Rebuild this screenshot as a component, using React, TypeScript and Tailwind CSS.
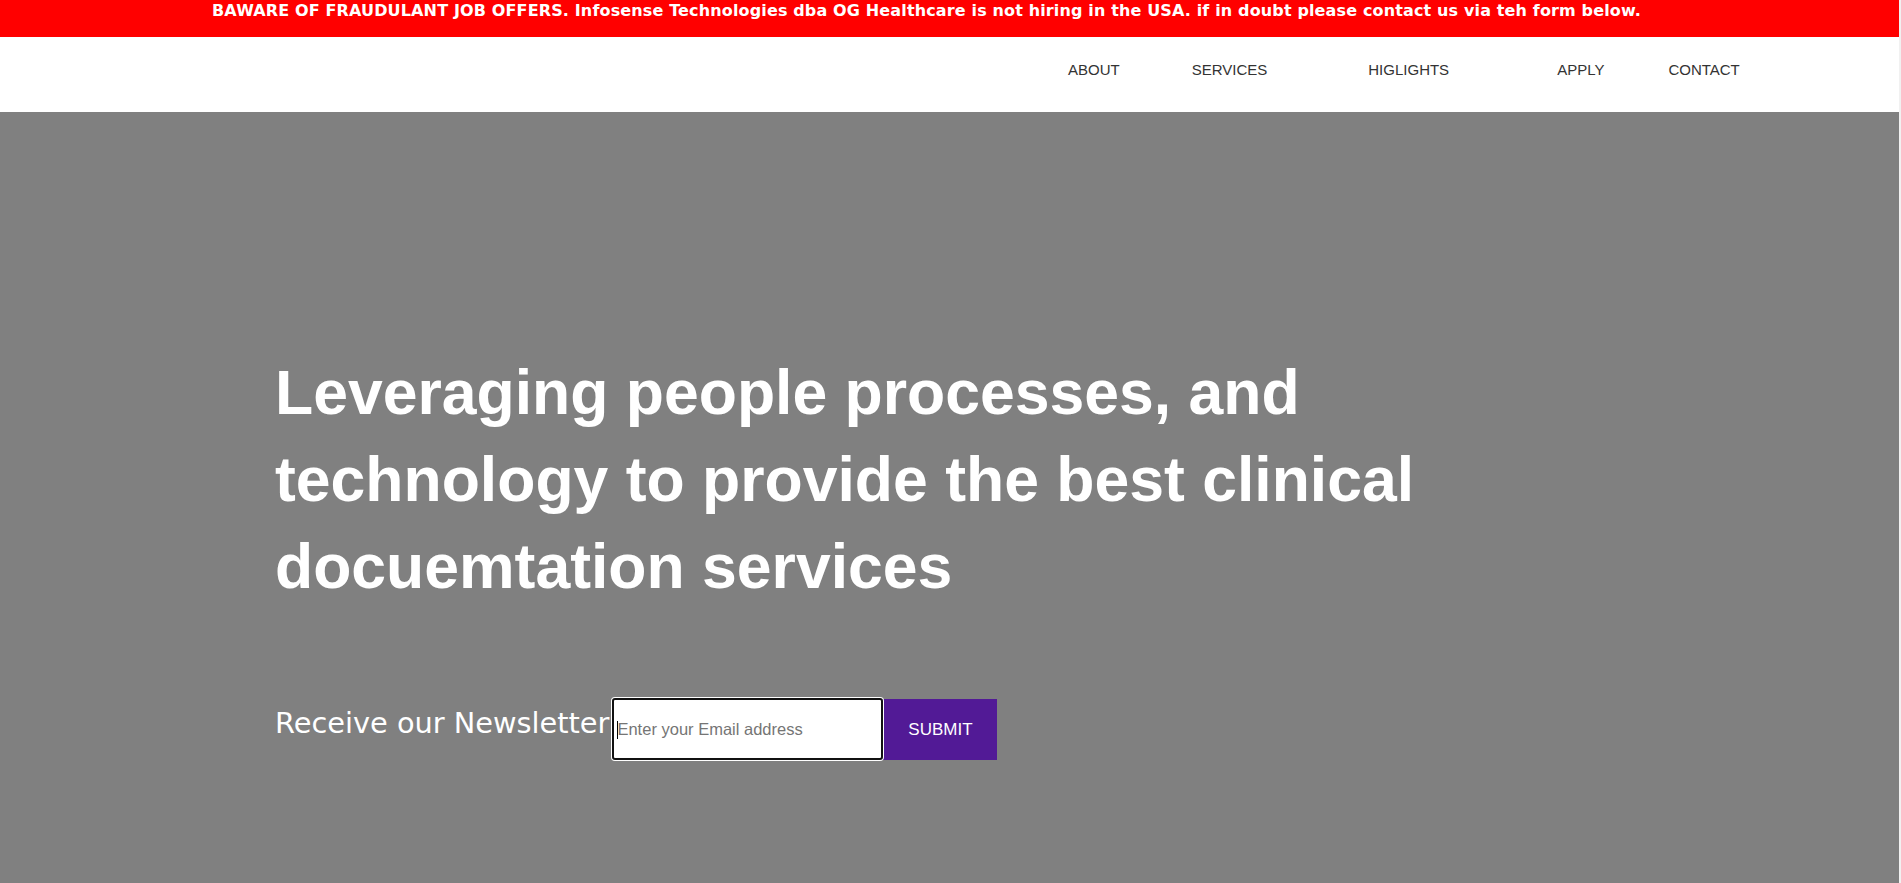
import React from 'react';

const navItems = [
  { label: 'ABOUT', cls: 'ml-0' },
  { label: 'SERVICES', cls: 'ml-[72px]' },
  { label: 'HIGLIGHTS', cls: 'ml-[101px]' },
  { label: 'APPLY', cls: 'ml-[108px]' },
  { label: 'CONTACT', cls: 'ml-[64px]' },
];

const App: React.FC = () => {
  return (
    <div className="flex min-h-[883px] w-full bg-[#f1f1f1]">
      <div className="flex flex-1 flex-col bg-[#808080]">
        {/* warning banner */}
        <div className="h-[37px] bg-[#ff0000] pt-[2px] pl-[212px]">
          <p className="font-['DejaVu_Sans',Verdana,sans-serif] text-[16px] font-bold leading-[1.164] tracking-[0.14px] text-white whitespace-nowrap">
            BAWARE OF FRAUDULANT JOB OFFERS. Infosense Technologies dba OG Healthcare is not hiring in the USA. if in doubt please contact us via teh form below.
          </p>
        </div>

        {/* nav */}
        <nav className="flex h-[75px] bg-white pt-[24px] pl-[1068px] font-['Liberation_Sans',Arial,sans-serif] text-[15px] leading-[1.15] text-[#333]">
          {navItems.map((item) => (
            <a key={item.label} href="#" className={item.cls}>
              {item.label}
            </a>
          ))}
        </nav>

        {/* hero */}
        <section className="flex min-h-[771px] flex-col pt-[237px] pl-[275px]">
          <h1 className="max-w-[1170px] font-['Liberation_Sans',Arial,sans-serif] text-[62.5px] font-bold leading-[87px] text-white">
            Leveraging people processes, and technology to provide the best clinical docuemtation services
          </h1>

          <div className="mt-[88px] flex items-start">
            <span className="mt-[9px] font-['DejaVu_Sans',Verdana,sans-serif] text-[28.8px] leading-[1.164] text-white">
              Receive our Newsletter
            </span>
            <div className="relative ml-[3px]">
              <input
                type="email"
                placeholder="Enter your Email address"
                className="h-[62px] w-[271px] rounded-[3px] border-2 border-[#111] bg-white pl-[3px] font-['Liberation_Sans',Arial,sans-serif] text-[16.5px] text-black outline-none ring-1 ring-white placeholder:text-[#757575]"
              />
              <span className="absolute top-[23px] left-[5px] h-[18px] w-px bg-black" />
            </div>
            <button className="mt-[1px] h-[61px] w-[114px] bg-[#521a96] font-['Liberation_Sans',Arial,sans-serif] text-[17px] text-white">
              SUBMIT
            </button>
          </div>
        </section>
      </div>
      <div className="w-[2px] shrink-0" />
    </div>
  );
};

export default App;
